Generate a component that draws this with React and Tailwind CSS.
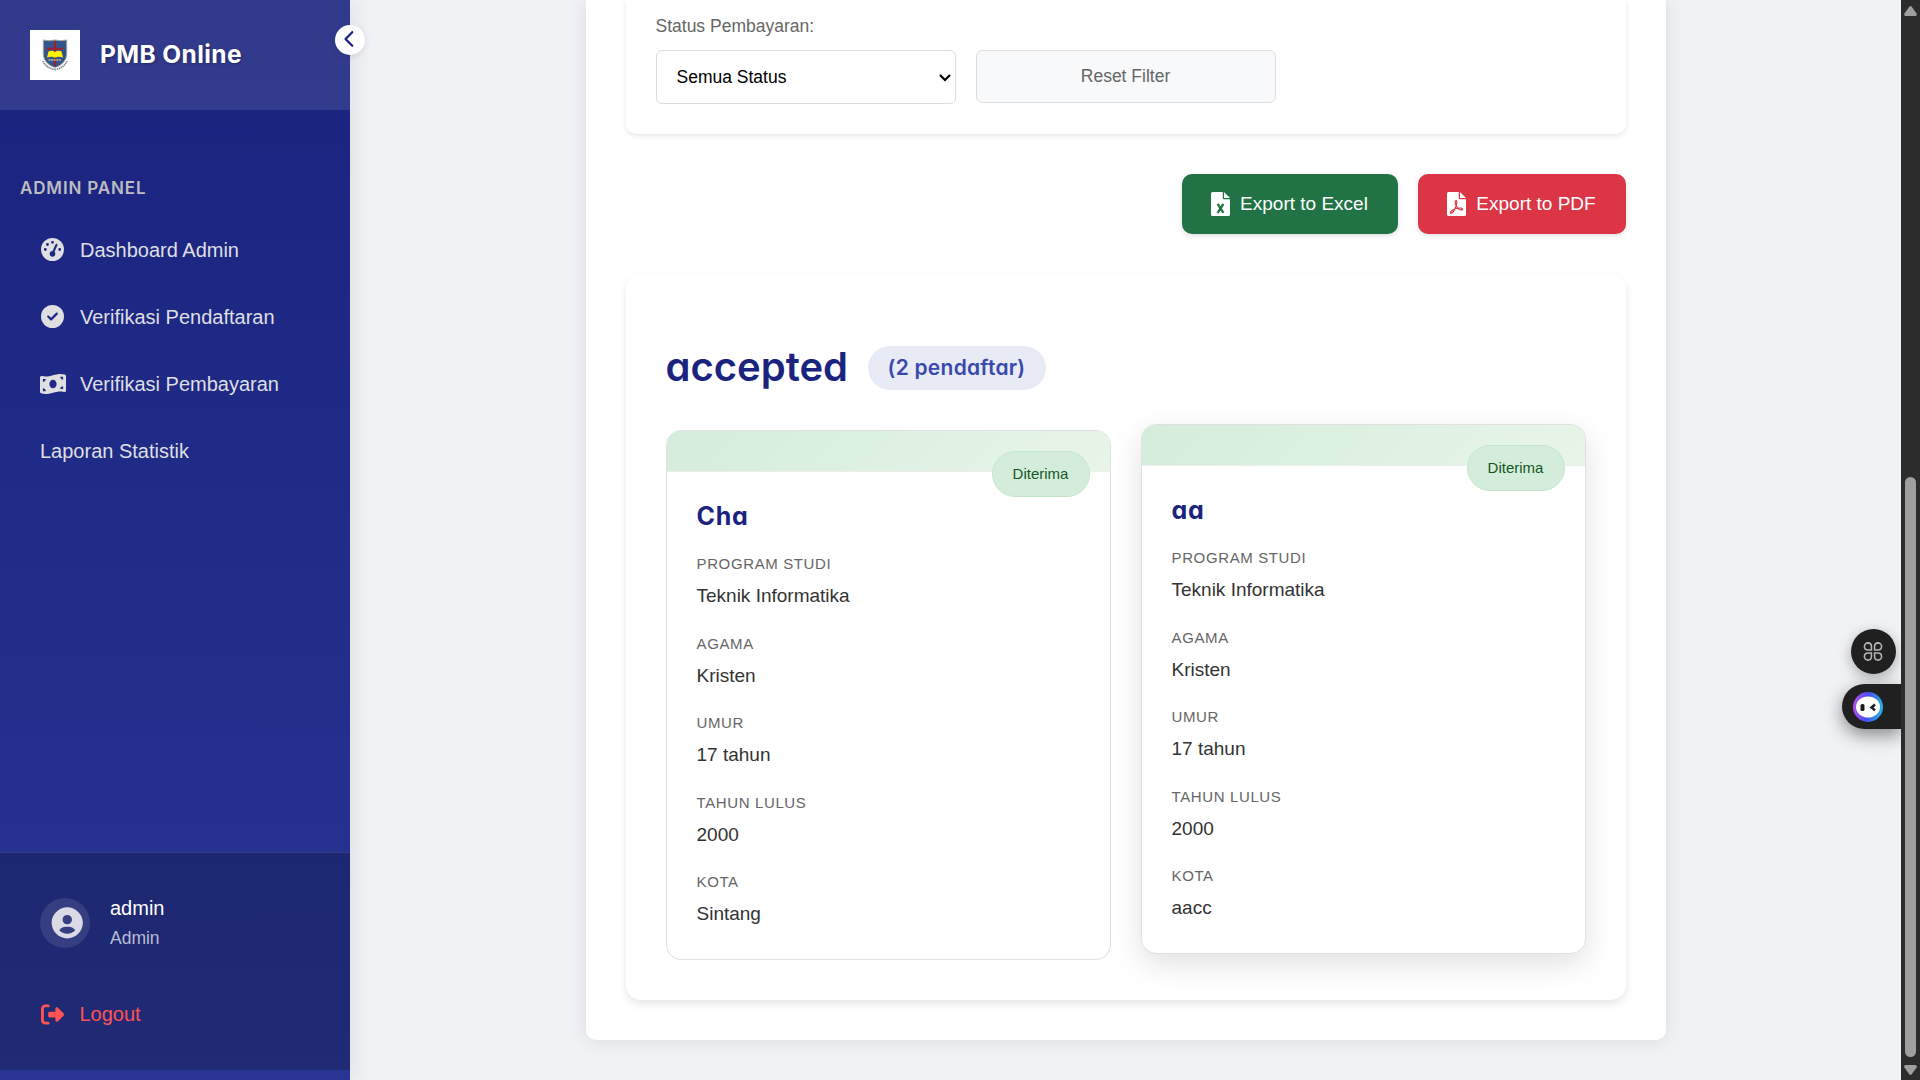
import React from "react";
import { FaGaugeHigh, FaCircleCheck, FaMoneyBillWave, FaRightFromBracket, FaChevronLeft } from "react-icons/fa6";
import { BiSolidUserCircle } from "react-icons/bi";

const menu = [
  { label: "Dashboard Admin", Icon: FaGaugeHigh, size: 23 },
  { label: "Verifikasi Pendaftaran", Icon: FaCircleCheck, size: 23 },
  { label: "Verifikasi Pembayaran", Icon: FaMoneyBillWave, size: 26 },
  { label: "Laporan Statistik" },
];

const applicants = [
  { name: "Cha", raised: false, kota: "Sintang" },
  { name: "aa", raised: true, kota: "aacc" },
];

function Crest() {
  return (
    <svg viewBox="0 0 50 50" className="size-[50px] shrink-0 bg-white">
      <path d="M13.3 10 Q19 11.5 25 10 Q31 11.5 36.7 10 L36.7 24 Q36.7 33 25 38 Q13.3 33 13.3 24Z" fill="#34548c" stroke="#a3a396" strokeWidth="1" />
      <path d="M25 11.5V36M17 18.7H33" stroke="#a51c2a" strokeWidth="2" />
      <path d="M18.5 21.5Q22 20 25 22Q28 20 31.5 21.5L33 27.5Q28 26 25 27.7Q22 26 17 27.5Z" fill="#fdf000" />
      <path d="M18.5 30H31.5" stroke="#b9b79c" strokeWidth="1.6" strokeDasharray="2 .6" />
      <path d="M13 31Q16 38 25 39.5Q34 38 37 31" fill="none" stroke="#fff" strokeWidth="3.2" />
      <path d="M13 31Q16 38 25 39.5Q34 38 37 31" fill="none" stroke="#85858c" strokeWidth="1.8" strokeDasharray="1.4 .7" />
    </svg>
  );
}

function FileIcon({ children }) {
  return (
    <svg viewBox="0 0 19 24" className="h-6 w-[19px] shrink-0" fill="none">
      <path d="M1.5 0H11.8V6.2Q11.8 7.2 12.8 7.2H19V22.5Q19 24 17.5 24H1.5Q0 24 0 22.5V1.5Q0 0 1.5 0Z" fill="#fff" />
      <path d="M13 0L19 6H13Z" fill="#fff" />
      {children}
    </svg>
  );
}

function Sidebar() {
  return (
    <aside className="relative z-10 flex h-full w-[350px] shrink-0 flex-col bg-linear-to-b from-[#1a237e] to-[#283593] shadow-[4px_0_20px_rgba(0,0,0,0.08)]">
      <div className="flex h-[110px] items-center gap-5 bg-white/10 px-[30px]">
        <Crest />
        <span className="pb-[2px] font-[Inter] text-[24.5px] font-bold tracking-[0.4px] text-white [text-shadow:1px_1px_3px_rgba(0,0,0,0.3)]">PMB Online</span>
      </div>
      <button className="absolute top-[25px] -right-[15px] flex size-[30px] items-center justify-center rounded-full bg-white text-[#1a237e] shadow-[0_2px_6px_rgba(0,0,0,0.1)]">
        <FaChevronLeft size={18} className="-translate-y-px" />
      </button>
      <nav className="flex flex-1 flex-col pt-[63px]">
        <h2 className="mb-[13px] h-[30px] pl-5 font-[Inter] text-[17px] leading-[31px] font-semibold tracking-[0.85px] text-[#bdbdc0]">ADMIN PANEL</h2>
        {menu.map(({ label, Icon, size }) => (
          <a key={label} className="flex h-[67px] items-center pl-10 text-[20px] text-[#dfdfe2]">
            {Icon && (
              <span className="mr-[15px] flex w-[25px] justify-center">
                <Icon size={size} className="shrink-0" />
              </span>
            )}
            {label}
          </a>
        ))}
      </nav>
      <div className="mb-[10px] flex h-[218px] flex-col border-t border-white/10 bg-black/20 px-10 pt-[45px]">
        <div className="flex h-[50px] items-center gap-5">
          <span className="flex size-[50px] items-center justify-center rounded-full bg-white/10 text-[#d9dae6]">
            <BiSolidUserCircle size={37.5} className="translate-x-[2.5px]" />
          </span>
          <div className="flex flex-col">
            <span className="text-[20px] leading-[30px] text-white">admin</span>
            <span className="pt-px text-[17.5px] leading-[29px] text-white/70">Admin</span>
          </div>
        </div>
        <a className="mt-[46px] flex h-[40px] items-center text-[20px] text-[#ff5252]">
          <FaRightFromBracket size={23} className="mr-[15.5px] ml-px" />
          Logout
        </a>
      </div>
    </aside>
  );
}

function Applicant({ data }) {
  const rows = [
    ["PROGRAM STUDI", "Teknik Informatika"],
    ["AGAMA", "Kristen"],
    ["UMUR", "17 tahun"],
    ["TAHUN LULUS", "2000"],
    ["KOTA", data.kota],
  ];
  return (
    <article
      className={
        "relative h-[530px] flex-1 overflow-hidden rounded-[15px] border border-[#e0e0e0] bg-white " +
        (data.raised ? "-translate-y-[6px] shadow-[0_10px_30px_rgba(0,0,0,0.12)]" : "")
      }
    >
      <div className="h-[41px] border-b border-[#eceeec] bg-linear-135 from-[#d4edda] to-[#e8f5e9]" />
      <span className="absolute top-5 right-5 flex h-[46px] w-[98px] items-center justify-center rounded-[25px] border border-[#c3e6cb] bg-[#d4edda] text-[15px] text-[#155724]">Diterima</span>
      <div className="px-[30px] pt-[24px]">
        <h3 className="h-10 font-[Inter] text-[25px] leading-10 font-bold tracking-[0.7px] text-[#1a237e] [font-feature-settings:'cv11']">{data.name}</h3>
        <dl className="mt-[17px] flex flex-col gap-[21.5px]">
          {rows.map(([k, v]) => (
            <div key={k}>
              <dt className="h-[22px] text-[15px] leading-[22px] tracking-[0.625px] text-[#666]">{k}</dt>
              <dd className="mt-[6px] h-[30px] text-[19px] leading-[30px] text-[#333]">{v}</dd>
            </div>
          ))}
        </dl>
      </div>
    </article>
  );
}

function Filters() {
  return (
    <section className="h-[134px] rounded-b-[10px] bg-white px-[30px] pt-[11px] text-[17.5px] shadow-[0_2px_5px_rgba(0,0,0,0.1)]">
      <div className="h-[30px] leading-[30px] text-[#666]">Status Pembayaran:</div>
      <div className="mt-[9px] flex items-start gap-5">
        <div className="flex h-[54px] w-[300px] items-center justify-between rounded-[6px] border border-[#ddd] bg-white pr-[4px] pl-[20px] text-black">
          Semua Status
          <svg viewBox="0 0 12 8" className="mt-[2px] h-[8px] w-[12px]" fill="none" stroke="#000" strokeWidth="2.2"><path d="M1 1L6 6L11 1" /></svg>
        </div>
        <button className="h-[53px] w-[300px] rounded-[6px] border border-[#ddd] bg-[#f8f9fa] text-[#666]">Reset Filter</button>
      </div>
    </section>
  );
}

function Assistants() {
  return (
    <div className="absolute top-[629px] right-[19px] z-20 flex w-[59px] flex-col">
      <div className="mb-[10px] ml-[9px] flex size-[45px] items-center justify-center rounded-full bg-[#202020] shadow-[0_4px_14px_rgba(0,0,0,0.3)]">
        <svg viewBox="0 0 20 20" className="size-[21px] -translate-x-[0.5px]" fill="none" stroke="#b4b4b4" strokeWidth="1.5">
          <path d="M8.5 8.5H5.3A3.5 3.5 0 0 1 1.8 5.2A3.4 3.4 0 0 1 5.2 1.8A3.5 3.5 0 0 1 8.5 5.3Z" />
          <path d="M11.5 8.5V5.3A3.5 3.5 0 0 1 14.8 1.8A3.4 3.4 0 0 1 18.2 5.2A3.5 3.5 0 0 1 14.7 8.5Z" />
          <path d="M8.5 11.5V14.7A3.5 3.5 0 0 1 5.2 18.2A3.4 3.4 0 0 1 1.8 14.8A3.5 3.5 0 0 1 5.3 11.5Z" />
          <path d="M11.5 11.5H14.7A3.5 3.5 0 0 1 18.2 14.8A3.4 3.4 0 0 1 14.8 18.2A3.5 3.5 0 0 1 11.5 14.7Z" />
        </svg>
      </div>
      <div className="flex h-[45px] w-[59px] items-center rounded-l-full bg-[#202020] pl-[11px] shadow-[0_6px_18px_rgba(0,0,0,0.45)]">
        <svg viewBox="0 0 30 30" className="size-[30px]">
          <defs>
            <linearGradient id="ring" x1="0" y1=".6" x2="1" y2=".7">
              <stop offset="0" stopColor="#b44cf0" />
              <stop offset=".45" stopColor="#4a4cf5" />
              <stop offset="1" stopColor="#25b8e0" />
            </linearGradient>
          </defs>
          <circle cx="15" cy="15" r="15" fill="url(#ring)" />
          <ellipse cx="15" cy="15" rx="12" ry="10.5" fill="#fff" />
          <rect x="7.5" y="12" width="4" height="7" rx="1.6" fill="#1c1c1c" />
          <path d="M22 12.5L18.5 15.5L22 18.2" fill="none" stroke="#1c1c1c" strokeWidth="2.4" />
        </svg>
      </div>
    </div>
  );
}

function Scrollbar() {
  return (
    <div className="relative z-30 flex w-[19px] shrink-0 flex-col items-center bg-[#2c2c2c]">
      <svg viewBox="0 0 13 10" className="mt-[6px] h-[10px] w-[13px]" fill="#9f9f9f"><path d="M5.3 .8Q6.5 -.6 7.7 .8L12.6 7.4Q13.2 9.8 11.6 10H1.4Q-.2 9.8 .4 7.4Z" /></svg>
      <div className="mt-[461px] h-[580px] w-[11px] rounded-full bg-[#9f9f9f]" />
      <svg viewBox="0 0 13 10" className="mt-[8px] h-[10px] w-[13px] rotate-180" fill="#9f9f9f"><path d="M5.3 .8Q6.5 -.6 7.7 .8L12.6 7.4Q13.2 9.8 11.6 10H1.4Q-.2 9.8 .4 7.4Z" /></svg>
    </div>
  );
}

export default function App() {
  return (
    <div className="relative flex h-[1080px] w-[1920px] overflow-hidden bg-[#f0f2f5] font-['Liberation_Sans',Arial,sans-serif]">
      <Sidebar />
      <main className="flex flex-1 justify-center">
        <div className="h-[1040px] w-[1080px] rounded-b-[10px] bg-white px-10 shadow-[0_0_20px_rgba(0,0,0,0.1)]">
          <Filters />
          <div className="mt-10 flex justify-end gap-5 text-[19px] text-white">
            <button className="flex h-[60px] w-[216px] items-center justify-center gap-[10px] rounded-[10px] bg-[#217346] shadow-[0_2px_5px_rgba(0,0,0,0.12)]">
              <FileIcon>
                <path d="M6.6 11.8L12.4 20.8M12.4 11.8L6.6 20.8" stroke="#217346" strokeWidth="2.3" />
              </FileIcon>
              Export to Excel
            </button>
            <button className="flex h-[60px] w-[208px] items-center justify-center gap-[10px] rounded-[10px] bg-[#dc3545] shadow-[0_2px_5px_rgba(0,0,0,0.12)]">
              <FileIcon>
                <path
                  d="M9 8.7C7.6 8.9 8 11.6 9.2 13.7C10.6 16.2 12.6 18 14.6 17.9C16.2 17.7 15.6 16.1 13.6 16C11 15.9 7 17 4.9 18.6C3 20 3 21.5 4.2 21.2C5.8 20.8 7.8 17.6 9 14.2C9.9 11.6 10.2 8.6 9 8.7Z"
                  stroke="#dc3545"
                  strokeWidth="1.2"
                />
              </FileIcon>
              Export to PDF
            </button>
          </div>
          <section className="mt-10 h-[726px] rounded-[15px] bg-white px-10 pt-[64px] shadow-[0_4px_8px_rgba(0,0,0,0.1)]">
            <div className="flex h-[60px] items-center font-[Inter] font-semibold [font-feature-settings:'cv11']">
              <h2 className="w-[202px] pb-[2px] text-[40px] whitespace-nowrap text-[#1a237e]">accepted</h2>
              <span className="flex h-[44px] w-[178px] items-center justify-center rounded-[25px] bg-[#e8eaf6] text-[21px] tracking-[0.25px] whitespace-nowrap text-[#3949ab]">(2 pendaftar)</span>
            </div>
            <div className="mt-8 flex gap-[30px]">
              {applicants.map((a) => (
                <Applicant key={a.name} data={a} />
              ))}
            </div>
          </section>
        </div>
      </main>
      <Scrollbar />
      <Assistants />
    </div>
  );
}
